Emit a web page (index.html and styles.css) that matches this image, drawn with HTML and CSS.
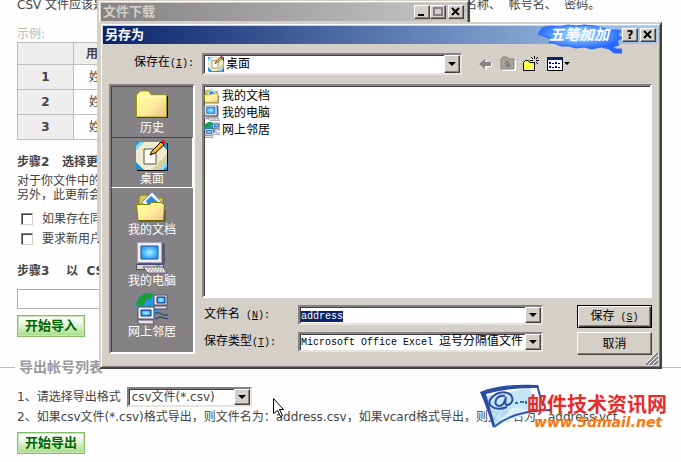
FILE: index.html
```html
<!DOCTYPE html>
<html lang="zh-CN">
<head>
  <meta charset="UTF-8" />
  <meta name="viewport" content="width=device-width, initial-scale=1.0"/>
  <title>帐号导入导出</title>
  <link rel="stylesheet" href="styles.css">
</head>
<body>

  <svg class="defs" aria-hidden="true">
    <defs>
      <linearGradient id="yellow" x1="0" y1="0" x2="1" y2="1">
        <stop offset="0" stop-color="#ffff9c"/><stop offset=".5" stop-color="#fff09c"/><stop offset="1" stop-color="#f0c090"/>
      </linearGradient>
      <radialGradient id="screen">
        <stop offset="0" stop-color="#a8f4ff"/><stop offset="1" stop-color="#2ca0f0"/>
      </radialGradient>
    </defs>
    <symbol id="i-history" viewBox="0 0 32 32">
      <path d="M1 29V7l3-4h8l4 4h16v22z" fill="#000"/>
      <path d="M.5 28V6l4-4h8l3 4h15v22z" fill="url(#yellow)" stroke="#9c9a00"/>
      <path d="M1 8h14l1-1h14" fill="none" stroke="#ffffd8"/>
    </symbol>
    <symbol id="i-desktop" viewBox="0 0 32 32">
      <path d="M1 3h31v28H1z" fill="#000"/>
      <path d="M0 2h31v28H0z" fill="#1c94d0"/>
      <path d="M8 2h15l8 8v12l-8 8H8l-8-8V10z" fill="#efebce"/>
      <path d="M23 30l8-8v-8L16 30z" fill="#d8d09c"/>
      <path d="M0 10l8-8H4L0 6zM31 22l-8 8h4l4-4z" fill="#8cdcff"/>
      <path d="M8 9h12v15H8z" fill="#fffff0" stroke="#555"/>
      <path d="M14 15l2-4L25 2l3 3-9 8z" fill="#ffb820" stroke="#000"/>
      <path d="M25 1l2-2 3 3-2 3z" fill="#e02010"/>
    </symbol>
    <symbol id="i-docs" viewBox="0 0 32 32">
      <path d="M3 26V6l2-2h6l2 3h14v20z" fill="#d8cc58" stroke="#848200"/>
      <path d="M5 12L16 1l15 16-4 5z" fill="#eef4ff" stroke="#7888c0"/>
      <path d="M10 10l5-5 7 6-3 3h-7z" fill="#2c8ce0"/>
      <path d="M.5 13.5h13l2-2h10l3 3-1 15H2z" fill="url(#yellow)" stroke="#848200"/>
      <path d="M29 15v15H3" fill="none" stroke="#4a4800"/>
    </symbol>
    <symbol id="i-computer" viewBox="0 0 32 32">
      <path d="M2 0h24l3 3v18l-3 3H2z" fill="#585878"/>
      <path d="M1.500.5h24v20h-24z" fill="#f0ece8" stroke="#a8a6c8"/>
      <path d="M5 4h17v13H5z" fill="url(#screen)" stroke="#2050a0"/>
      <path d="M.5 22.500h27v5H.5z" fill="#d8d4d0" stroke="#4c4a68"/>
      <path d="M7 25h20l4 6H12z" fill="#f4f0ec" stroke="#5c5880"/>
      <path d="M11 27h16M13 29h16" stroke="#908c98" stroke-dasharray="2 1"/>
      <path d="M20 24h4" stroke="#30b030"/>
    </symbol>
    <symbol id="i-network" viewBox="0 0 32 32">
      <circle cx="12" cy="12" r="12" fill="#2c94e4"/>
      <path d="M3 4l7-4 7 1-2 5-5 1-2 5-5 2-3-3zM8 15l6-3 3 4-3 7H8z" fill="#18a038"/>
      <path d="M18 2h13v10H18z" fill="#ece8e4" stroke="#505070"/>
      <path d="M21 4h8v6h-8z" fill="url(#screen)" stroke="#183080"/>
      <path d="M18 13h13v3H18z" fill="#e0dcd8" stroke="#505070"/>
      <path d="M2 14h16v12H2z" fill="#f4f0f0" stroke="#505070"/>
      <path d="M5 17h10v6H5z" fill="url(#screen)" stroke="#183080"/>
      <path d="M1 27h16l1 4H3z" fill="#e8e4e0" stroke="#505070"/>
      <path d="M19 20h5l3 2h5M19 26l5-2 8 2" fill="none" stroke="#103c80"/>
    </symbol>
  </svg>

  <main>
    <div class="section">
      <p class="intro">CSV 文件应该是逗号分隔的文本，每行一个用户，各列内容依次为用户的姓名、显示名称、&nbsp; 帐号名、&nbsp; 密码。</p>
      <p class="sample">示例:</p>
      <table>
        <tr><th></th><th class="name">用户名</th></tr>
        <tr><th>1</th><td>姓名</td></tr>
        <tr><th>2</th><td>姓名</td></tr>
        <tr><th>3</th><td>姓名</td></tr>
      </table>

      <h3>步骤2&nbsp;&nbsp; 选择更新方式</h3>
      <p class="note">对于你文件中的帐号<br>另外，此更新会生效</p>
      <div class="check"><input type="checkbox" id="same"><label for="same">如果存在同名</label></div>
      <div class="check"><input type="checkbox" id="newUser"><label for="newUser">要求新用户</label></div>

      <h3>步骤3&nbsp;&nbsp;&nbsp; 以&nbsp; CSV 导入</h3>
      <input type="text" class="path" aria-label="CSV 文件">
      <button type="button" class="green">开始导入</button>
    </div>

    <fieldset>
      <legend>导出帐号列表</legend>
      <div class="format">
        <label for="format">1、请选择导出格式</label>
        <span class="combo">
          <select id="format"><option>csv文件(*.csv)</option></select>
          <span class="arrow"></span>
        </span>
      </div>
      <p class="hint">2、如果csv文件(*.csv)格式导出，则文件名为：address.csv，如果vcard格式导出，则文件名为：address.vcf</p>
      <button type="button" class="green">开始导出</button>
    </fieldset>
  </main>

  <div class="window download">
    <div class="titlebar inactive">
      <span class="title">文件下载</span>
      <button type="button" class="cap" aria-label="最小化"><svg width="12" height="10"><path d="M2 7h6v2H2z"/></svg></button>
      <button type="button" class="cap" aria-label="最大化"><svg width="12" height="10"><path d="M2 1h8v7H2z" fill="none" stroke="#848284" stroke-width="2"/></svg></button>
      <button type="button" class="cap close" aria-label="关闭"><svg width="12" height="10"><path d="M2 1l7 7M9 1L2 8" stroke="#000" stroke-width="2"/></svg></button>
    </div>
  </div>

  <div class="window save" role="dialog" aria-label="另存为">
    <div class="titlebar">
      <span class="title">另存为</span>
      <button type="button" class="cap">?</button>
      <button type="button" class="cap close" aria-label="关闭"><svg width="12" height="10"><path d="M2 1l7 7M9 1L2 8" stroke="#000" stroke-width="2"/></svg></button>
    </div>

    <div class="content">
      <label class="lookin" for="folder">保存在<span class="en">(<u>I</u>):</span></label>
      <div class="toolbar">
        <span class="combo">
          <svg class="small"><use href="#i-desktop"/></svg>
          <select id="folder"><option>桌面</option></select>
          <span class="arrow"></span>
        </span>
        <button type="button" class="tool" aria-label="后退"><svg width="16" height="16"><path d="M3 9l6-5v3h5v4H9v3z" fill="#fff"/><path d="M1 8l6-5v3h6v4H7v3z" fill="#848284"/></svg></button>
        <button type="button" class="tool" aria-label="向上"><svg width="16" height="16"><path d="M2 15V4l2-2h4l2 2h6v11z" fill="#fff"/><path d="M1 13V3l2-2h4l1 2h6v10z" fill="#a5a29c" stroke="#848284"/><path d="M5 8l2-3 2 3H8v2h3M7 8v3" fill="none" stroke="#666"/></svg></button>
        <button type="button" class="tool" aria-label="新建文件夹"><svg width="18" height="16"><path d="M1.500 14.500V6.500l2-2h3l1 2h5v8z" fill="#ffff4a" stroke="#000"/><path d="M12.500 0v3M12.500 6v3M8 4.500h3M14 4.500h3M9 1l2 2M16 1l-2 2M16 8l-2-2" stroke="#000"/></svg></button>
        <button type="button" class="tool" aria-label="查看"><svg width="24" height="16"><path d="M1.500 1.500h15v13h-15z" fill="#fff" stroke="#000"/><path d="M1 1h16v3H1z" fill="#0a246a"/><path d="M3 6h2v2H3zM3 10h2v2H3zM9 6h2v2H9zM9 10h2v2H9z" fill="#0808b0"/><path d="M6 7.500h2M6 11.500h2M12 7.500h2M12 11.500h2" stroke="#000"/><path d="M18 6h6l-3 3z"/></svg></button>
      </div>

      <nav class="places">
        <a href="#"><svg><use href="#i-history"/></svg>历史</a>
        <a href="#" class="active"><svg><use href="#i-desktop"/></svg>桌面</a>
        <a href="#"><svg><use href="#i-docs"/></svg>我的文档</a>
        <a href="#"><svg><use href="#i-computer"/></svg>我的电脑</a>
        <a href="#"><svg><use href="#i-network"/></svg>网上邻居</a>
      </nav>

      <ul class="files">
        <li><svg class="small"><use href="#i-docs"/></svg>我的文档</li>
        <li><svg class="small"><use href="#i-computer"/></svg>我的电脑</li>
        <li><svg class="small"><use href="#i-network"/></svg>网上邻居</li>
      </ul>

      <div class="bottom">
        <label for="fileName">文件名<span class="en"> (<u>N</u>):</span></label>
        <span class="combo">
          <input type="text" id="fileName" class="en" value="address">
          <span class="arrow"></span>
        </span>
        <button type="button" class="btn default">保存<span class="en"> (<u>S</u>)</span></button>
        <label for="fileType">保存类型<span class="en">(<u>T</u>):</span></label>
        <span class="combo">
          <span class="value"><span class="en">Microsoft Office Excel </span>逗号分隔值文件</span>
          <select id="fileType" class="over"><option>Microsoft Office Excel 逗号分隔值文件</option></select>
          <span class="arrow"></span>
        </span>
        <button type="button" class="btn">取消</button>
      </div>
    </div>
    <svg class="grip" width="12" height="12"><path d="M0 12L12 0M4 12l8-8M8 12l4-4" stroke="#848284" stroke-width="2"/><path d="M-1 11L11-1M3 11l9-9M7 11l5-5" stroke="#fff"/></svg>

    <div class="ime">
      <svg viewBox="0 0 84 30">
        <defs><radialGradient id="blob" cx=".48" cy=".35" r=".5"><stop offset="0" stop-color="#d8f0ff"/><stop offset=".45" stop-color="#6cb0ff"/><stop offset="1" stop-color="#2868ff"/></radialGradient></defs>
        <path d="M0 10l4-6 9-2 8 1 9-2 8 1 8-1 10 1 9 2 5 2 9 0 4 1-3 4 4 3-5 3 2 4-6 2 3 2 8 0-2 4-8 0-5-4-8-2-9 2-8-2-8 1-7-2-8 0-7-3-5 0 2-4z" fill="url(#blob)" stroke="#2c6cf8"/>
      </svg>
      <span>五笔加加</span>
    </div>
  </div>

  <svg class="cursor" width="13" height="20"><path d="M1.500 1.500v15l4-3 3 6 2-1-3-6h4z" fill="#fff" stroke="#000"/></svg>

  <div class="watermark">
    <svg viewBox="0 0 74 46">
      <path d="M6 12l44-8 5 22-40 16z" fill="#b8e0f4" fill-opacity=".85"/>
      <path d="M14 42l18-18 28 2z" fill="#e4f4fc" fill-opacity=".8"/>
      <path d="M0 8Q22-1 58 1L59 4Q30 3 6 10L15 41 13 44Q7 24 0 8z" fill="#2c4ca4"/>
      <path d="M57 1l6 21M14 43Q34 26 72 26" fill="none" stroke="#3458b0" stroke-width="2"/>
      <path d="M25 12q-7-1-9 4t3 6q5 0 7-9-2 9 2 8 7-3 3-10-6-5-15-1-10 7-5 12 6 5 16 1" fill="none" stroke="#2c4ca4" stroke-width="2"/>
      <path d="M35 19h3M40 18h4M46 17v3" stroke="#2c70b4" stroke-width="2"/>
    </svg>
    <div class="brand">
      <strong>邮件技术资讯网</strong>
      <em>www.5dmail.net</em>
    </div>
  </div>

  <script>
    document.getElementById("fileName").select();
  </script>

</body>
</html>
```
FILE: styles.css
```css
* {
  box-sizing: border-box;
}

body {
  margin: 0;
  background: #fefefe;
  color: #444;
  font-family: "DejaVu Sans", "Noto Sans CJK SC", sans-serif;
  font-size: 12px;
  line-height: 18px;
}

p,
h3 {
  margin: 0;
  white-space: nowrap;
}

button,
input,
select {
  font: inherit;
  color: inherit;
  margin: 0;
}

svg {
  display: block;
}

.defs {
  position: absolute;
  width: 0;
  height: 0;
}

/* page behind the dialogs, scrolled by a few pixels */
main {
  margin-top: -4px;
}

.section {
  padding: 0 17px;
}

.sample {
  margin-top: 12px;
  line-height: 16px;
  color: #b5bdad;
}

table {
  width: 500px;
  border-collapse: collapse;
}

th,
td {
  height: 25px;
  padding: 0 15px;
  border: 1px solid #bdbdbd;
  text-align: left;
}

th {
  background: #eee;
}

th:first-child {
  width: 56px;
  padding: 0;
  text-align: center;
}

tr:first-child th {
  height: 22px;
}

th.name {
  padding: 0 12px;
}

h3 {
  margin-top: 13px;
  font-size: 12px;
}

.note {
  margin: 3px 0 7px;
  line-height: 14px;
}

.check {
  display: flex;
  align-items: center;
  height: 20px;
  gap: 9px;
  padding-left: 4px;
}

.check input {
  appearance: none;
  width: 12px;
  height: 12px;
  border: 1px solid;
  border-color: #848284 #d4d0c8 #d4d0c8 #848284;
  background: #fff;
  box-shadow: inset 1px 1px #424142;
}

.path {
  display: block;
  width: 220px;
  height: 20px;
  margin: 9px 0 6px;
  border: 1px solid #adaea5;
  background: #fff;
}

.green {
  display: block;
  width: 68px;
  height: 22px;
  padding: 0;
  border: 1px solid #84be6b;
  box-shadow: inset 0 0 0 1px #c6e7b5;
  background: linear-gradient(#fff, #eff7e7 35%, #a5db84);
  color: #006500;
  font-size: 13px;
  font-weight: bold;
  line-height: 18px;
}

fieldset {
  min-width: 0;
  margin: 21px 0 0;
  padding: 11px 17px 0;
  border: 0;
  border-top: 1px solid #bdbdbd;
}

legend {
  margin-left: -2px;
  padding: 0 4px;
  color: #9c9a9c;
  font-size: 14px;
  font-weight: bold;
}

.format {
  display: flex;
  align-items: center;
  gap: 6px;
  height: 20px;
}

.format .combo {
  width: 125px;
}

.hint {
  margin-bottom: 5px;
  line-height: 20px;
}

/* combo box */
.combo {
  display: flex;
  position: relative;
  align-items: center;
  height: 20px;
  padding-left: 1px;
  border: 2px solid;
  border-color: #848284 #e7e3de #e7e3de #848284;
  background: #fff;
  box-shadow: inset 1px 1px #424142;
}

.combo select,
.combo input {
  appearance: none;
  flex: 1;
  min-width: 0;
  height: 16px;
  padding: 0 2px;
  border: 0;
  outline: 0;
  background: none;
  line-height: 16px;
}

.combo input {
  padding: 3px 0 0;
  line-height: 12px;
}

.combo .over {
  position: absolute;
  inset: 0;
  opacity: 0;
}

.combo .value {
  flex: 1;
  overflow: hidden;
  white-space: pre;
  line-height: 16px;
}

.arrow {
  display: flex;
  flex: none;
  align-self: stretch;
  align-items: center;
  justify-content: center;
  width: 16px;
  border: 1px solid;
  border-color: #fff #424142 #424142 #fff;
  background: #d4d0c8;
  box-shadow: inset -1px -1px #848284;
  pointer-events: none;
}

.arrow::after {
  content: "";
  border: 4px solid transparent;
  border-top-color: #000;
  border-bottom: 0;
}

/* windows */
.window {
  position: absolute;
  padding: 2px;
  border: 2px solid;
  border-color: #d4d0c8 #424142 #424142 #d4d0c8;
  background: #d4d0c8;
  box-shadow: inset 1px 1px #fff, inset -1px -1px #848284;
  color: #000;
}

.download {
  left: 97px;
  top: -1px;
  width: 373px;
  height: 244px;
}

.save {
  left: 99px;
  top: 22px;
  width: 563px;
}

.titlebar {
  display: flex;
  align-items: center;
  height: 18px;
  padding: 0 2px;
  background: linear-gradient(90deg, #0a246a, #a6caf0);
  color: #fff;
}

.inactive {
  background: linear-gradient(90deg, #848284, #c6c7c6);
  color: #d4d0c8;
}

.title {
  flex: 1;
  font-size: 13px;
  font-weight: bold;
}

.cap {
  display: flex;
  align-items: center;
  justify-content: center;
  width: 16px;
  height: 14px;
  padding: 0;
  border: 1px solid;
  border-color: #fff #424142 #424142 #fff;
  background: #d4d0c8;
  box-shadow: inset -1px -1px #848284;
  color: #000;
  font-weight: bold;
  line-height: 12px;
}

.close {
  margin-left: 2px;
}

.content {
  display: grid;
  grid-template-columns: 86px 1fr;
  column-gap: 7px;
  padding: 9px 6px 10px;
}

.en {
  font-family: "Liberation Mono", monospace;
  font-size: 10px;
}

.lookin {
  padding-right: 1px;
  text-align: right;
  white-space: nowrap;
}

.toolbar {
  display: flex;
  align-items: center;
  gap: 6px;
  height: 22px;
  margin-bottom: 9px;
}

.toolbar .combo {
  width: 260px;
  height: 22px;
  margin-right: 10px;
  padding-left: 4px;
}

.small {
  flex: none;
  width: 16px;
  height: 16px;
}

.tool {
  padding: 0;
  border: 0;
  background: none;
}

.places {
  grid-row: span 2;
  align-self: start;
  padding-bottom: 11px;
  border: 2px solid;
  border-color: #848284 #fff #fff #848284;
  background: #848284;
  box-shadow: inset 1px 1px #424142;
}

.places a {
  display: flex;
  flex-direction: column;
  align-items: center;
  height: 51px;
  padding-top: 3px;
  color: #fff;
  text-decoration: none;
  line-height: 14px;
}

.places .active {
  border: 1px solid;
  border-color: #424142 #fff #fff #424142;
  padding-top: 2px;
}

.places svg {
  width: 32px;
  height: 32px;
}

.files {
  height: 214px;
  margin: 0 0 7px;
  padding: 1px 0;
  border: 2px solid;
  border-color: #848284 #fff #fff #848284;
  background: #fff;
  box-shadow: inset 1px 1px #424142;
  list-style: none;
}

.files li {
  display: flex;
  align-items: center;
  gap: 2px;
  height: 17px;
}

.bottom {
  display: grid;
  grid-template-columns: 94px 1fr 75px;
  gap: 4px 0;
  padding-left: 2px;
}

.bottom .combo {
  margin-right: 34px;
}

.bottom ::selection {
  background: #0a246a;
  color: #fff;
}

.btn {
  height: 23px;
  padding: 0;
  border: 1px solid;
  border-color: #fff #424142 #424142 #fff;
  background: #d4d0c8;
  box-shadow: inset -1px -1px #848284;
}

.default {
  border-color: #000;
  box-shadow: inset 1px 1px #fff, inset -1px -1px #424142, inset -2px -2px #848284;
}

.grip {
  position: absolute;
  right: 2px;
  bottom: 2px;
}

/* input method badge floating over the title bar */
.ime {
  position: absolute;
  top: 0;
  right: 38px;
  width: 84px;
  color: #fff;
  font-size: 15px;
  font-style: italic;
  font-weight: bold;
}

.ime span {
  position: absolute;
  top: 2px;
  left: 11px;
  white-space: nowrap;
}

.cursor {
  position: absolute;
  left: 272px;
  top: 397px;
}

.watermark {
  position: absolute;
  left: 480px;
  top: 384px;
  width: 190px;
}

.watermark svg {
  width: 74px;
}

.brand {
  position: absolute;
  left: 47px;
  top: 13px;
  white-space: nowrap;
}

.brand strong {
  display: block;
  color: #e72c29;
  font-size: 20px;
  line-height: 16px;
}

.brand em {
  display: block;
  padding-left: 7px;
  color: #ff7510;
  font-size: 14px;
  font-weight: bold;
}
```
